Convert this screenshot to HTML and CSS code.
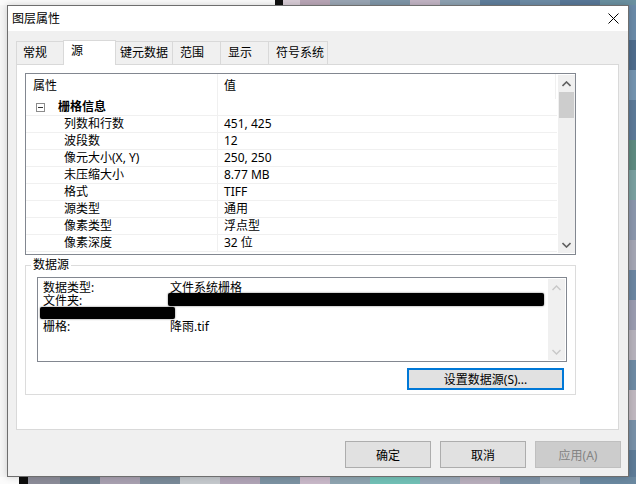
FILE: index.html
```html
<!DOCTYPE html>
<html lang="zh-CN">
<head>
    <meta charset="UTF-8">
    <link rel="stylesheet" href="styles.css">
</head>
<body>
    <div class="desktop">
        <div class="window">
            <div class="titlebar">
                <span class="title">图层属性</span>
                <svg class="close" width="11" height="11" viewBox="0 0 11 11">
                    <path d="M0.5 0.5 L10.5 10.5 M10.5 0.5 L0.5 10.5" stroke="#000" stroke-width="1" fill="none"/>
                </svg>
            </div>

            <div class="content">
                <div class="tabs">
                    <div class="tab w-general">常规</div>
                    <div class="tab active w-source">源</div>
                    <div class="tab w-meta">键元数据</div>
                    <div class="tab w-extent">范围</div>
                    <div class="tab w-display">显示</div>
                    <div class="tab w-symbol">符号系统</div>
                </div>

                <div class="page">
                    <div class="grid">
                        <div class="grid-main">
                            <div class="row head">
                                <div class="c1">属性</div>
                                <div class="c2">值</div>
                            </div>
                            <div class="row group">
                                <div class="c1">
                                    <span class="toggle"></span>
                                    <b>栅格信息</b>
                                </div>
                                <div class="c2"></div>
                            </div>
                            <div class="row"><div class="c1">列数和行数</div><div class="c2">451, 425</div></div>
                            <div class="row"><div class="c1">波段数</div><div class="c2">12</div></div>
                            <div class="row"><div class="c1">像元大小(X, Y)</div><div class="c2">250, 250</div></div>
                            <div class="row"><div class="c1">未压缩大小</div><div class="c2">8.77 MB</div></div>
                            <div class="row"><div class="c1">格式</div><div class="c2">TIFF</div></div>
                            <div class="row"><div class="c1">源类型</div><div class="c2">通用</div></div>
                            <div class="row"><div class="c1">像素类型</div><div class="c2">浮点型</div></div>
                            <div class="row"><div class="c1">像素深度</div><div class="c2">32 位</div></div>
                        </div>
                        <div class="vscroll">
                            <svg class="arrow" width="9" height="6" viewBox="0 0 9 6"><path d="M0.5 5 L4.5 1 L8.5 5" stroke="#606060" stroke-width="1.6" fill="none"/></svg>
                            <div class="thumb"></div>
                            <div class="track"></div>
                            <svg class="arrow" width="9" height="6" viewBox="0 0 9 6"><path d="M0.5 1 L4.5 5 L8.5 1" stroke="#606060" stroke-width="1.6" fill="none"/></svg>
                        </div>
                    </div>

                    <fieldset class="source">
                        <legend>数据源</legend>
                        <div class="srcbox">
                            <div class="srctext">
                                <div class="line"><span class="key">数据类型:</span><span>文件系统栅格</span></div>
                                <div class="line"><span class="key">文件夹:</span><span class="redact long"></span></div>
                                <div class="line"><span class="redact short"></span></div>
                                <div class="line"><span class="key">栅格:</span><span>降雨.tif</span></div>
                            </div>
                            <div class="vscroll off">
                                <svg class="arrow" width="9" height="6" viewBox="0 0 9 6"><path d="M0.5 5 L4.5 1 L8.5 5" stroke="#c8c8c8" stroke-width="1.4" fill="none"/></svg>
                                <div class="track"></div>
                                <svg class="arrow" width="9" height="6" viewBox="0 0 9 6"><path d="M0.5 1 L4.5 5 L8.5 1" stroke="#c8c8c8" stroke-width="1.4" fill="none"/></svg>
                            </div>
                        </div>
                        <button class="btn focus">设置数据源(S)...</button>
                    </fieldset>
                </div>
            </div>

            <div class="footer">
                <button class="btn">确定</button>
                <button class="btn">取消</button>
                <button class="btn" disabled>应用(A)</button>
            </div>
        </div>
    </div>
</body>
</html>
```

FILE: styles.css
```css
* {
    box-sizing: border-box;
}

body {
    margin: 0;
    width: 636px;
    height: 484px;
    overflow: hidden;
    font-family: "Noto Sans", "Noto Sans CJK SC", sans-serif;
    font-size: 12px;
    color: #000;
}

/* blurred desktop behind the dialog */
.desktop {
    width: 636px;
    height: 484px;
    padding: 5px 0 0 7px;
    background:
        linear-gradient(to right, #fbfbfb 0 275px, #111 275px 283px, #d8ccd6 283px 300px, #b9a6b6 300px 330px,
            #9aa6b4 330px 370px, #7f96a8 370px 410px, #c2b4c4 410px 440px, #8ea2b2 440px 480px,
            #5f7e9c 480px 520px, #6e8ca6 520px 560px, #587898 560px 600px, #6a90a0 600px 636px) top / 100% 5px no-repeat,
        linear-gradient(to right, #fbfbfb 0 19px, #0c0c0c 19px 28px, #8c8c98 28px 60px, #6c7c8a 60px 100px,
            #a8a0b0 100px 140px, #7a8a98 140px 180px, #c4c8cc 180px 220px, #b0a4b6 220px 260px,
            #7c92a2 260px 300px, #c8b8c8 300px 330px, #8ea4b0 330px 370px, #72c0b6 370px 420px,
            #9aa8b8 420px 460px, #b8aebc 460px 500px, #7e92a6 500px 540px, #a6b0bc 540px 580px,
            #6a88a0 580px 636px) bottom / 100% 7px no-repeat,
        linear-gradient(to bottom, #6a8aa8 0 40px, #4e6c8c 40px 70px, #7494b0 70px 100px, #5c7a98 100px 140px,
            #5e8a80 140px 170px, #7aa0a0 170px 200px, #8a96ac 200px 240px, #a4a6b4 240px 270px,
            #6c86a2 270px 300px, #9a9cb0 300px 330px, #b6b2bc 330px 360px, #6e8aa4 360px 390px,
            #c0b8c0 390px 420px, #7890a8 420px 450px, #5e7c98 450px 484px) right / 7px 100% no-repeat,
        #f6f6f6;
}

.window {
    width: 622px;
    height: 472px;
    border: 1px solid #6e6e6e;
    background: #f0f0f0;
    display: flex;
    flex-direction: column;
    box-shadow: 0 0 7px rgba(0,0,0,0.18);
}

.titlebar {
    height: 25px;
    background: #fff;
    display: flex;
    align-items: center;
    justify-content: space-between;
    padding: 0 9px 0 4px;
}

.title {
    line-height: 16px;
}

.content {
    padding: 9px 9px 0 8px;
    display: flex;
    flex-direction: column;
}

/* tab strip */
.tabs {
    display: flex;
    align-items: flex-end;
    height: 25px;
    position: relative;
    z-index: 1;
}

.tab {
    height: 23px;
    margin-bottom: 1px;
    margin-left: -1px;
    padding: 3px 0 0 6px;
    border: 1px solid #d9d9d9;
    border-bottom: none;
    background: #f0f0f0;
    line-height: 16px;
}

.tab:first-child {
    margin-left: 0;
}

.tab.active {
    height: 25px;
    margin-bottom: 0;
    padding: 2px 0 0 7px;
    background: #fff;
    z-index: 2;
}

.w-general { width: 48px; }
.w-source { width: 53px; }
.w-meta { width: 58px; padding-left: 4px; }
.w-extent { width: 49px; padding-left: 7px; }
.w-display { width: 49px; padding-left: 7px; }
.w-symbol { width: 60px; padding-left: 7px; }

.page {
    height: 366px;
    margin-top: -1px;
    background: #fff;
    border: 1px solid #d9d9d9;
    padding: 8px;
}

/* property grid */
.grid {
    width: 551px;
    height: 182px;
    border: 1px solid #828790;
    display: flex;
    overflow: hidden;
}

.grid-main {
    width: 531px;
}

.row {
    display: flex;
    height: 17px;
    border-bottom: 1px solid #f0f0f0;
    line-height: 16px;
}

.row .c1 {
    width: 192px;
    padding-left: 38px;
    border-right: 1px solid #f0f0f0;
    white-space: nowrap;
}

.row .c2 {
    flex: 1;
    padding-left: 6px;
}

.row.head {
    height: 25px;
    border-bottom: none;
    line-height: 24px;
}

.row.head .c1 {
    padding-left: 7px;
}

.row.head .c2 {
    border-right: 1px solid #f0f0f0;
    margin-right: 1px;
}

.row.group .c1 {
    padding-left: 10px;
    display: flex;
    align-items: center;
}

.toggle {
    width: 9px;
    height: 9px;
    border: 1px solid #8c8c8c;
    position: relative;
    margin-right: 13px;
}

.toggle::after {
    content: "";
    position: absolute;
    left: 1px;
    top: 3px;
    width: 5px;
    height: 1px;
    background: #333;
}

.group b {
    font-weight: bold;
}

.vscroll {
    width: 17px;
    margin: 1px 0 1px 1px;
    background: #f0f0f0;
    display: flex;
    flex-direction: column;
    align-items: center;
}

.vscroll .arrow {
    margin: 6px 0 5px;
    flex: none;
}

.vscroll .thumb {
    width: 15px;
    height: 26px;
    background: #cdcdcd;
}

.vscroll .track {
    flex: 1;
}

/* data source group */
.source {
    width: 551px;
    margin: 2px 0 0;
    padding: 4px 0 4px 11px;
    border: 1px solid #dcdcdc;
    display: flex;
    flex-direction: column;
    align-items: flex-start;
}

.source legend {
    margin-left: -6px;
    padding: 0 2px;
    line-height: 16px;
}

.srcbox {
    width: 530px;
    height: 85px;
    border: 1px solid #828790;
    display: flex;
}

.srctext {
    flex: 1;
    padding: 3px 0 0 5px;
}

.line {
    display: flex;
    height: 13px;
    line-height: 13px;
    white-space: nowrap;
}

.key {
    width: 127px;
}

.redact {
    display: inline-block;
    height: 13px;
    background: #000;
    box-shadow: 0 0 2px rgba(0,0,0,0.6);
    border-radius: 2px;
}

.redact.long {
    width: 376px;
    margin: -1px 0 0 -2px;
}

.redact.short {
    width: 135px;
    height: 12px;
    margin: 0 0 0 -3px;
}

.vscroll.off {
    margin: 1px;
}

.btn {
    font-family: inherit;
    font-size: 12px;
    color: #000;
    background: #e1e1e1;
    border: 1px solid #adadad;
    padding: 0;
}

.btn.focus {
    align-self: flex-end;
    width: 157px;
    height: 22px;
    margin: 6px 11px 0 0;
    border: 2px solid #0078d7;
}

.footer {
    display: flex;
    justify-content: flex-end;
    gap: 9px;
    padding: 11px 7px 0 0;
}

.footer .btn {
    width: 86px;
    height: 27px;
}

.btn:disabled {
    background: #cccccc;
    border-color: #bfbfbf;
    color: #838383;
}
```
